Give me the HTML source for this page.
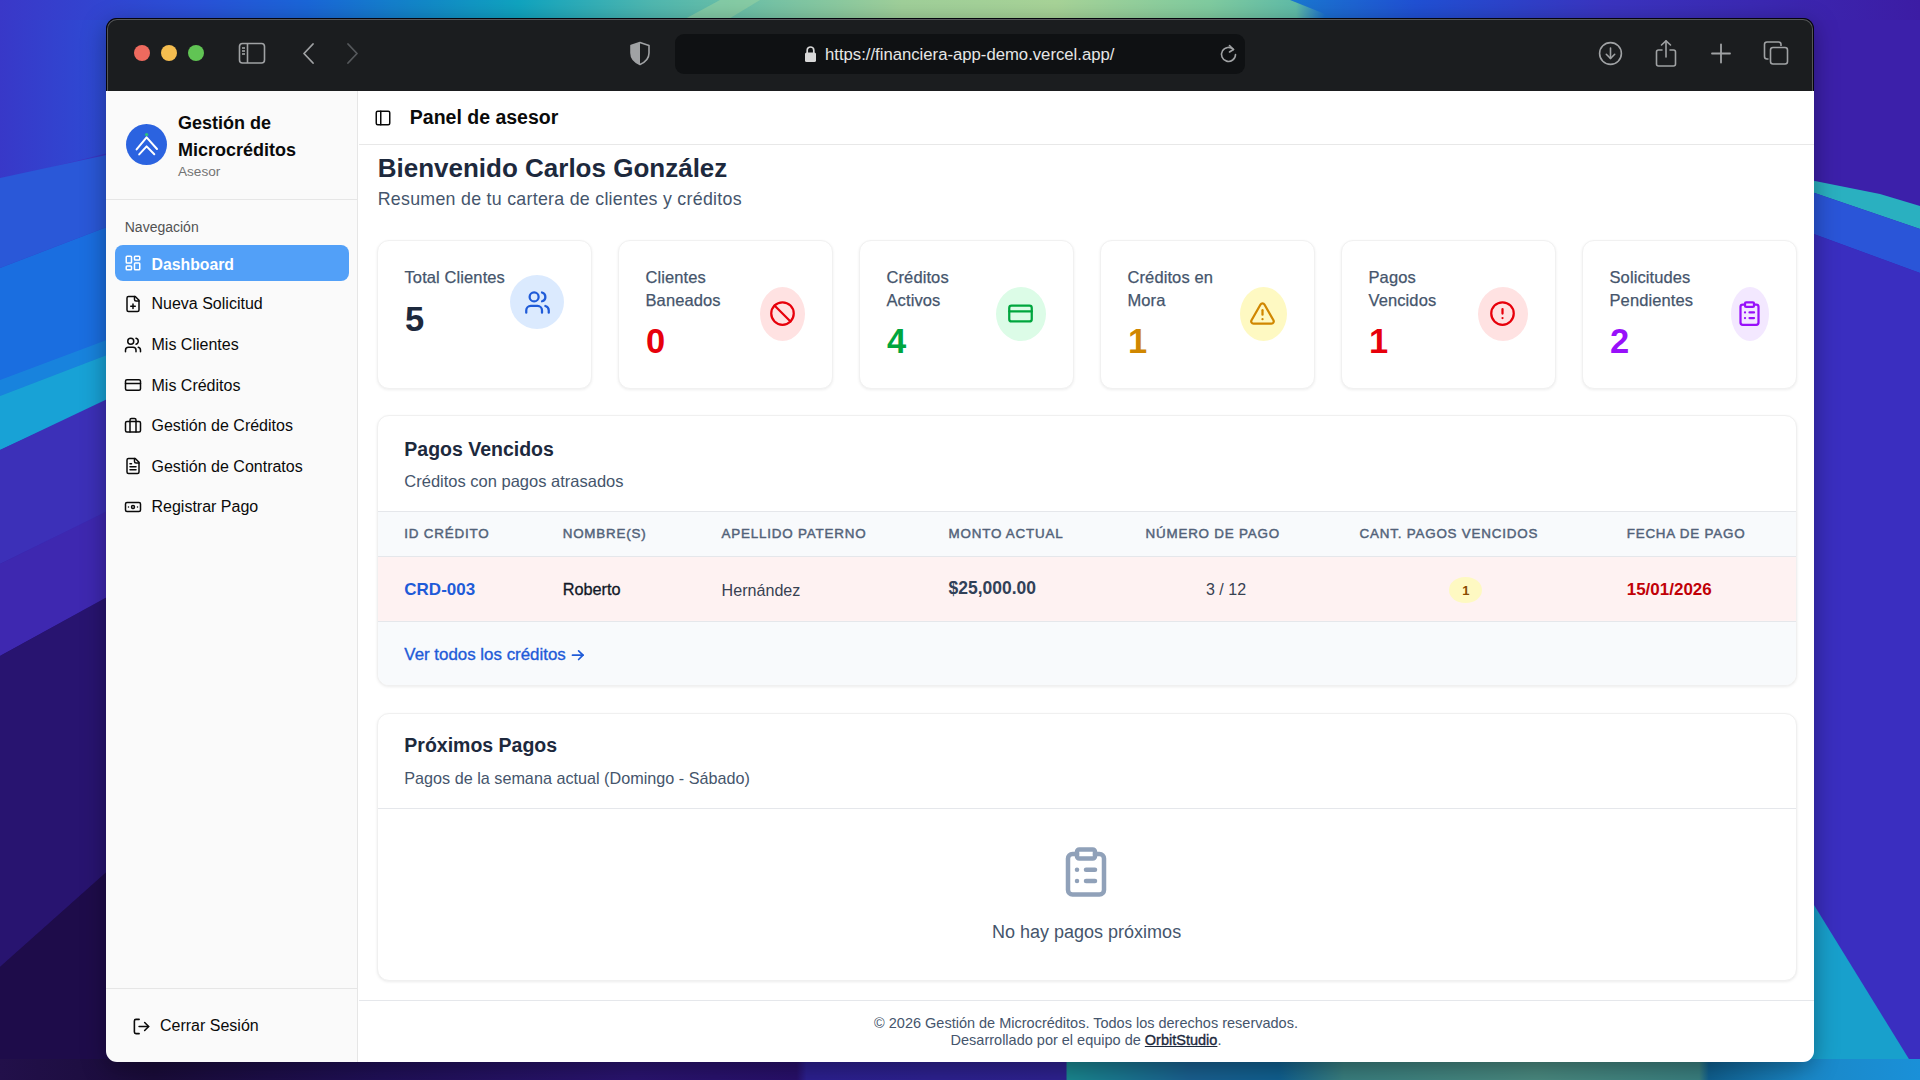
<!DOCTYPE html>
<html><head><meta charset="utf-8">
<style>
*{box-sizing:border-box;margin:0;padding:0}
html,body{width:1920px;height:1080px;overflow:hidden;font-family:"Liberation Sans",sans-serif}
body{position:relative;background:#2a1a80}
.abs{position:absolute}
.t{position:absolute;white-space:nowrap;line-height:1}
.box{position:absolute}
</style></head>
<body>
<svg class="abs" style="left:0;top:0" width="1920" height="1080" viewBox="0 0 1920 1080">
<defs>
<linearGradient id="wtop" x1="0" y1="0" x2="1920" y2="0" gradientUnits="userSpaceOnUse">
 <stop offset="0" stop-color="#3a38c8"/><stop offset="0.1" stop-color="#2a50d8"/><stop offset="0.16" stop-color="#1a66d8"/><stop offset="0.22" stop-color="#1288c8"/><stop offset="0.27" stop-color="#10a4c0"/><stop offset="0.34" stop-color="#50b8b0"/><stop offset="0.47" stop-color="#a0d09a"/><stop offset="0.55" stop-color="#a8d498"/><stop offset="0.63" stop-color="#80cca0"/><stop offset="0.675" stop-color="#60bca8"/><stop offset="0.69" stop-color="#1a70d0"/><stop offset="0.73" stop-color="#2050d0"/><stop offset="0.83" stop-color="#3a30c0"/><stop offset="1" stop-color="#3a1ca0"/>
</linearGradient>
<linearGradient id="wbot" x1="0" y1="0" x2="1920" y2="0" gradientUnits="userSpaceOnUse">
 <stop offset="0" stop-color="#22104a"/><stop offset="0.08" stop-color="#1a0c3a"/><stop offset="0.2" stop-color="#201058"/><stop offset="0.33" stop-color="#2a1470"/><stop offset="0.415" stop-color="#28106a"/><stop offset="0.42" stop-color="#2c2090"/><stop offset="0.555" stop-color="#2e2290"/><stop offset="0.556" stop-color="#1a8890"/><stop offset="0.62" stop-color="#1a6090"/><stop offset="0.666" stop-color="#106090"/><stop offset="0.70" stop-color="#3a8080"/><stop offset="0.80" stop-color="#4a8a80"/><stop offset="0.885" stop-color="#3a8080"/><stop offset="0.89" stop-color="#106090"/><stop offset="0.94" stop-color="#1a88c8"/><stop offset="1" stop-color="#1a90d8"/>
</linearGradient>
<linearGradient id="wleft" x1="0" y1="0" x2="0" y2="1080" gradientUnits="userSpaceOnUse">
 <stop offset="0" stop-color="#3a3ccc"/><stop offset="0.5" stop-color="#3a2ab4"/><stop offset="0.6" stop-color="#24106a"/><stop offset="1" stop-color="#1e0c48"/>
</linearGradient>
<linearGradient id="wtl" x1="0" y1="0" x2="120" y2="0" gradientUnits="userSpaceOnUse"><stop offset="0" stop-color="#3838c8"/><stop offset="1" stop-color="#2c4ed6"/></linearGradient>
<linearGradient id="wtop2" x1="1290" y1="0" x2="1920" y2="0" gradientUnits="userSpaceOnUse"><stop offset="0" stop-color="#1a78d0"/><stop offset="0.2" stop-color="#2050d4"/><stop offset="0.5" stop-color="#3a34c0"/><stop offset="1" stop-color="#3c1ca4"/></linearGradient>
<linearGradient id="wright" x1="0" y1="0" x2="0" y2="1080" gradientUnits="userSpaceOnUse">
 <stop offset="0" stop-color="#3a1ca4"/><stop offset="0.2" stop-color="#3c20b0"/><stop offset="0.5" stop-color="#3c2cc0"/><stop offset="1" stop-color="#3c2cc0"/>
</linearGradient>
</defs>
<rect width="1920" height="1080" fill="url(#wleft)"/>
<rect x="960" width="960" height="1080" fill="url(#wright)"/>
<polygon points="0,20 120,20 120,150 0,180" fill="url(#wtl)"/>
<polygon points="0,178 120,152 120,222 0,268" fill="#2a58d8"/>
<polygon points="0,268 120,222 120,350 0,396" fill="#1a6ee0"/>
<polygon points="0,380 120,335 120,355 0,400" fill="#1888dc" opacity="0.8"/>
<polygon points="0,396 120,350 120,395 0,450" fill="#18a2d6"/>
<polygon points="0,450 120,393 120,505 0,564" fill="#3c30b8"/>
<polygon points="0,564 120,505 120,590 0,656" fill="#3e28b0"/>
<polygon points="0,656 120,590 120,860 0,967" fill="#281470"/>
<polygon points="0,967 120,860 120,1080 0,1080" fill="#1e0c4a"/>
<polygon points="1800,0 1920,0 1920,205 1880,194 1800,178" fill="#3c20aa"/>
<polygon points="1800,178 1880,194 1920,206 1920,229 1800,188" fill="#2ab0c0"/>
<polygon points="1800,188 1920,229 1920,273 1800,229" fill="#2a55d8"/>
<polygon points="1800,229 1920,273 1920,1080 1800,1080" fill="#3a2ec0"/>
<polygon points="1800,886 1814,905 1920,1077 1920,1080 1800,1080" fill="#18a0cc"/>
<rect width="1920" height="20" fill="url(#wtop)"/>
<polygon points="1290,0 1920,0 1920,20 1340,20" fill="url(#wtop2)"/>
<polygon points="683,20 720,0 760,0 727,20" fill="#98d4a4" opacity="0.6"/>
<rect y="1059" width="1920" height="21" fill="url(#wbot)"/>
</svg>
<div class="box" style="left:106px;top:18px;width:1708px;height:1044px;border-radius:11px;background:transparent;box-shadow:0 6px 24px rgba(0,0,0,.35);overflow:hidden">
<div class="box" style="left:0;top:0;width:1708px;height:73px;background:#1b1d1f"></div>
<div class="box" style="left:28px;top:27px;width:16px;height:16px;border-radius:50%;background:#ee6a5e"></div>
<div class="box" style="left:55px;top:27px;width:16px;height:16px;border-radius:50%;background:#f5bd4f"></div>
<div class="box" style="left:82px;top:27px;width:16px;height:16px;border-radius:50%;background:#61c454"></div>
</div>
<svg class="abs" style="left:238px;top:42px" width="28" height="23" viewBox="0 0 28 23" fill="none" stroke="#a0a2a4" stroke-width="1.6"><rect x="1.5" y="1.5" width="25" height="19.5" rx="3"/><line x1="9.5" y1="1.5" x2="9.5" y2="21"/><line x1="4" y1="6" x2="7" y2="6"/><line x1="4" y1="9" x2="7" y2="9"/><line x1="4" y1="12" x2="7" y2="12"/></svg>
<svg class="abs" style="left:300px;top:42px" width="18" height="23" viewBox="0 0 18 23" fill="none" stroke="#a0a2a4" stroke-width="1.8" stroke-linecap="round" stroke-linejoin="round"><polyline points="13,2 4,11.5 13,21"/></svg>
<svg class="abs" style="left:343px;top:42px" width="18" height="23" viewBox="0 0 18 23" fill="none" stroke="#55585b" stroke-width="1.8" stroke-linecap="round" stroke-linejoin="round"><polyline points="5,2 14,11.5 5,21"/></svg>
<svg class="abs" style="left:629px;top:41px" width="22" height="25" viewBox="0 0 22 25"><path d="M11 1.5 L20 4.5 V12 C20 18 15.5 21.5 11 23.5 C6.5 21.5 2 18 2 12 V4.5 Z" fill="none" stroke="#a0a2a4" stroke-width="1.6" stroke-linejoin="round"/><path d="M11 1.5 L2 4.5 V12 C2 18 6.5 21.5 11 23.5 Z" fill="#a0a2a4"/></svg>
<div class="box" style="left:675px;top:34px;width:570px;height:40px;border-radius:9px;background:#0f1113"></div>
<svg class="abs" style="left:804px;top:45px" width="13" height="18" viewBox="0 0 13 18"><path d="M3.2 8 V5.3 A3.3 3.3 0 0 1 9.8 5.3 V8" fill="none" stroke="#d8d8d8" stroke-width="1.7"/><rect x="1" y="7.5" width="11" height="9.5" rx="1.6" fill="#d8d8d8"/></svg>
<div class="t" style="left:825.00px;top:46.66px;font-size:16.7px;color:#e6e6e6;font-weight:400;letter-spacing:0px;">https://financiera-app-demo.vercel.app/</div>
<svg class="abs" style="left:1218px;top:43px" width="21" height="22" viewBox="0 0 21 22" fill="none" stroke="#a0a2a4" stroke-width="1.6" stroke-linecap="round" stroke-linejoin="round"><path d="M15.5 6.5 A7 7 0 1 0 17.5 11.5"/><polyline points="11.5,2.5 15.5,6.5 11.5,9"/></svg>
<svg class="abs" style="left:1597px;top:41px" width="26" height="26" viewBox="0 0 26 26" fill="none" stroke="#a0a2a4" stroke-width="1.6" stroke-linecap="round" stroke-linejoin="round"><circle cx="13.5" cy="12.5" r="10.9"/><line x1="13.5" y1="7" x2="13.5" y2="17.5"/><polyline points="9.3,13.3 13.5,17.5 17.7,13.3"/></svg>
<svg class="abs" style="left:1654px;top:39px" width="24" height="29" viewBox="0 0 24 29" fill="none" stroke="#a0a2a4" stroke-width="1.6" stroke-linecap="round" stroke-linejoin="round"><path d="M8 11 H4.5 A2 2 0 0 0 2.5 13 V25 A2 2 0 0 0 4.5 27 H19.5 A2 2 0 0 0 21.5 25 V13 A2 2 0 0 0 19.5 11 H16"/><line x1="12" y1="2" x2="12" y2="18"/><polyline points="7.5,6 12,1.8 16.5,6"/></svg>
<svg class="abs" style="left:1709px;top:42px" width="23" height="23" viewBox="0 0 23 23" fill="none" stroke="#a0a2a4" stroke-width="1.8" stroke-linecap="round"><line x1="12" y1="2.5" x2="12" y2="20.5"/><line x1="3" y1="11.5" x2="21" y2="11.5"/></svg>
<svg class="abs" style="left:1762px;top:40px" width="28" height="27" viewBox="0 0 28 27" fill="none" stroke="#a0a2a4" stroke-width="1.6" stroke-linejoin="round"><path d="M6.5 19 H5 A2.5 2.5 0 0 1 2.5 16.5 V4.5 A2.5 2.5 0 0 1 5 2 H16.5 A2.5 2.5 0 0 1 19 4.5 V6"/><rect x="8.5" y="7.5" width="17" height="16.5" rx="2.5"/></svg>
<div class="box" style="left:106px;top:91px;width:252px;height:971px;background:#fafafa;border-right:1px solid #e6e6e6;border-bottom-left-radius:11px"></div>
<div class="box" style="left:358px;top:91px;width:1456px;height:971px;background:#fff;border-bottom-right-radius:11px"></div>
<div class="box" style="left:106px;top:199px;width:252px;height:1px;background:#e6e6e6"></div>
<div class="box" style="left:106px;top:988px;width:252px;height:1px;background:#e6e6e6"></div>
<svg class="abs" style="left:125.5px;top:124px" width="41" height="41" viewBox="0 0 41 41"><circle cx="20.5" cy="20.5" r="20.5" fill="#2b63e0"/><circle cx="20.6" cy="10.6" r="1.7" fill="#2fbf7a"/><polyline points="10.6,25.4 20.6,13.4 31,25" fill="none" stroke="#fff" stroke-width="2" stroke-linecap="round" stroke-linejoin="round"/><polyline points="13.2,30.4 20.6,22.4 28.3,30.2" fill="none" stroke="#fff" stroke-width="2" stroke-linecap="round" stroke-linejoin="round"/></svg>
<div class="t" style="left:178.00px;top:114.36px;font-size:18px;color:#0a0a0a;font-weight:700;letter-spacing:0px;">Gestión de</div>
<div class="t" style="left:178.00px;top:141.46px;font-size:18px;color:#0a0a0a;font-weight:700;letter-spacing:0px;">Microcréditos</div>
<div class="t" style="left:178.00px;top:165.29px;font-size:13.6px;color:#737373;font-weight:400;letter-spacing:0px;">Asesor</div>
<div class="t" style="left:124.75px;top:219.85px;font-size:14px;color:#525252;font-weight:400;letter-spacing:0px;">Navegación</div>
<div class="box" style="left:114.6px;top:245px;width:234.2px;height:36px;border-radius:8px;background:#52a0f8"></div>
<svg class="abs" style="left:123.5px;top:254.39999999999998px;" width="18" height="18" viewBox="0 0 24 24" fill="none" stroke="#fff" stroke-width="2" stroke-linecap="round" stroke-linejoin="round"><rect width="7" height="9" x="3" y="3" rx="1"/><rect width="7" height="5" x="14" y="3" rx="1"/><rect width="7" height="9" x="14" y="12" rx="1"/><rect width="7" height="5" x="3" y="16" rx="1"/></svg>
<div class="t" style="left:151.50px;top:256.53px;font-size:15.8px;color:#fff;font-weight:700;letter-spacing:0px;">Dashboard</div>
<svg class="abs" style="left:123.5px;top:294.5px;" width="18" height="18" viewBox="0 0 24 24" fill="none" stroke="#0a0a0a" stroke-width="2" stroke-linecap="round" stroke-linejoin="round"><path d="M15 2H6a2 2 0 0 0-2 2v16a2 2 0 0 0 2 2h12a2 2 0 0 0 2-2V7Z"/><path d="M14 2v4a2 2 0 0 0 2 2h4"/><path d="M9 15h6"/><path d="M12 18v-6"/></svg>
<div class="t" style="left:151.50px;top:296.46px;font-size:16px;color:#0a0a0a;font-weight:400;letter-spacing:0px;">Nueva Solicitud</div>
<svg class="abs" style="left:123.5px;top:335.5px;" width="18" height="18" viewBox="0 0 24 24" fill="none" stroke="#0a0a0a" stroke-width="2" stroke-linecap="round" stroke-linejoin="round"><path d="M16 21v-2a4 4 0 0 0-4-4H6a4 4 0 0 0-4 4v2"/><circle cx="9" cy="7" r="4"/><path d="M22 21v-2a4 4 0 0 0-3-3.87"/><path d="M16 3.13a4 4 0 0 1 0 7.75"/></svg>
<div class="t" style="left:151.50px;top:337.46px;font-size:16px;color:#0a0a0a;font-weight:400;letter-spacing:0px;">Mis Clientes</div>
<svg class="abs" style="left:123.5px;top:376.0px;" width="18" height="18" viewBox="0 0 24 24" fill="none" stroke="#0a0a0a" stroke-width="2" stroke-linecap="round" stroke-linejoin="round"><rect width="20" height="14" x="2" y="5" rx="2"/><line x1="2" x2="22" y1="10" y2="10"/></svg>
<div class="t" style="left:151.50px;top:377.96px;font-size:16px;color:#0a0a0a;font-weight:400;letter-spacing:0px;">Mis Créditos</div>
<svg class="abs" style="left:123.5px;top:416.5px;" width="18" height="18" viewBox="0 0 24 24" fill="none" stroke="#0a0a0a" stroke-width="2" stroke-linecap="round" stroke-linejoin="round"><path d="M16 20V4a2 2 0 0 0-2-2h-4a2 2 0 0 0-2 2v16"/><rect width="20" height="14" x="2" y="6" rx="2"/></svg>
<div class="t" style="left:151.50px;top:418.46px;font-size:16px;color:#0a0a0a;font-weight:400;letter-spacing:0px;">Gestión de Créditos</div>
<svg class="abs" style="left:123.5px;top:457.0px;" width="18" height="18" viewBox="0 0 24 24" fill="none" stroke="#0a0a0a" stroke-width="2" stroke-linecap="round" stroke-linejoin="round"><path d="M15 2H6a2 2 0 0 0-2 2v16a2 2 0 0 0 2 2h12a2 2 0 0 0 2-2V7Z"/><path d="M14 2v4a2 2 0 0 0 2 2h4"/><path d="M10 9H8"/><path d="M16 13H8"/><path d="M16 17H8"/></svg>
<div class="t" style="left:151.50px;top:458.96px;font-size:16px;color:#0a0a0a;font-weight:400;letter-spacing:0px;">Gestión de Contratos</div>
<svg class="abs" style="left:123.5px;top:497.5px;" width="18" height="18" viewBox="0 0 24 24" fill="none" stroke="#0a0a0a" stroke-width="2" stroke-linecap="round" stroke-linejoin="round"><rect width="20" height="12" x="2" y="6" rx="2"/><circle cx="12" cy="12" r="2"/><path d="M6 12h.01M18 12h.01"/></svg>
<div class="t" style="left:151.50px;top:499.46px;font-size:16px;color:#0a0a0a;font-weight:400;letter-spacing:0px;">Registrar Pago</div>
<svg class="abs" style="left:132px;top:1017px;" width="19" height="19" viewBox="0 0 24 24" fill="none" stroke="#0a0a0a" stroke-width="2" stroke-linecap="round" stroke-linejoin="round"><path d="M9 21H5a2 2 0 0 1-2-2V5a2 2 0 0 1 2-2h4"/><polyline points="16 17 21 12 16 7"/><line x1="21" x2="9" y1="12" y2="12"/></svg>
<div class="t" style="left:160.00px;top:1018.46px;font-size:16px;color:#0a0a0a;font-weight:400;letter-spacing:0px;">Cerrar Sesión</div>
<div class="box" style="left:359px;top:144px;width:1455px;height:1px;background:#e8e8e8"></div>
<svg class="abs" style="left:374px;top:109px;" width="18" height="18" viewBox="0 0 24 24" fill="none" stroke="#0a0a0a" stroke-width="2" stroke-linecap="round" stroke-linejoin="round"><rect width="18" height="18" x="3" y="3" rx="2"/><path d="M9 3v18"/></svg>
<div class="t" style="left:409.80px;top:107.79px;font-size:19.5px;color:#0a0a0a;font-weight:700;letter-spacing:0px;">Panel de asesor</div>
<div class="t" style="left:377.70px;top:154.79px;font-size:26px;color:#1d293d;font-weight:700;letter-spacing:0px;">Bienvenido Carlos González</div>
<div class="t" style="left:377.70px;top:190.93px;font-size:17.8px;color:#45556c;font-weight:400;letter-spacing:0.28px;">Resumen de tu cartera de clientes y créditos</div>
<div class="box" style="left:376.5px;top:240px;width:215.5px;height:148.5px;border-radius:12px;background:#fff;border:1px solid #f1f1f1;box-shadow:0 1px 3px rgba(0,0,0,.07)"></div>
<div class="t" style="left:404.50px;top:269.23px;font-size:16.5px;color:#45556c;font-weight:400;letter-spacing:0.1px;-webkit-text-stroke:0.25px #45556c">Total Clientes</div>
<div class="t" style="left:405.00px;top:301.80px;font-size:34.5px;color:#1d293d;font-weight:700;letter-spacing:0px;">5</div>
<div class="box" style="left:510px;top:275px;width:54px;height:54px;border-radius:50%;background:#dbeafe"></div>
<svg class="abs" style="left:523.5px;top:288.5px;" width="27" height="27" viewBox="0 0 24 24" fill="none" stroke="#1f5bd8" stroke-width="2" stroke-linecap="round" stroke-linejoin="round"><path d="M16 21v-2a4 4 0 0 0-4-4H6a4 4 0 0 0-4 4v2"/><circle cx="9" cy="7" r="4"/><path d="M22 21v-2a4 4 0 0 0-3-3.87"/><path d="M16 3.13a4 4 0 0 1 0 7.75"/></svg>
<div class="box" style="left:617.5px;top:240px;width:215.5px;height:148.5px;border-radius:12px;background:#fff;border:1px solid #f1f1f1;box-shadow:0 1px 3px rgba(0,0,0,.07)"></div>
<div class="t" style="left:645.50px;top:269.23px;font-size:16.5px;color:#45556c;font-weight:400;letter-spacing:0.1px;-webkit-text-stroke:0.25px #45556c">Clientes</div>
<div class="t" style="left:645.50px;top:291.73px;font-size:16.5px;color:#45556c;font-weight:400;letter-spacing:0.1px;-webkit-text-stroke:0.25px #45556c">Baneados</div>
<div class="t" style="left:646.00px;top:323.80px;font-size:34.5px;color:#e7000b;font-weight:700;letter-spacing:0px;">0</div>
<div class="box" style="left:760px;top:287px;width:45px;height:54px;border-radius:50%;background:#ffe2e2"></div>
<svg class="abs" style="left:769.0px;top:299.7px;" width="27" height="27" viewBox="0 0 24 24" fill="none" stroke="#e7000b" stroke-width="2" stroke-linecap="round" stroke-linejoin="round"><circle cx="12" cy="12" r="10"/><path d="m4.9 4.9 14.2 14.2"/></svg>
<div class="box" style="left:858.5px;top:240px;width:215.5px;height:148.5px;border-radius:12px;background:#fff;border:1px solid #f1f1f1;box-shadow:0 1px 3px rgba(0,0,0,.07)"></div>
<div class="t" style="left:886.50px;top:269.23px;font-size:16.5px;color:#45556c;font-weight:400;letter-spacing:0.1px;-webkit-text-stroke:0.25px #45556c">Créditos</div>
<div class="t" style="left:886.50px;top:291.73px;font-size:16.5px;color:#45556c;font-weight:400;letter-spacing:0.1px;-webkit-text-stroke:0.25px #45556c">Activos</div>
<div class="t" style="left:887.00px;top:323.80px;font-size:34.5px;color:#00a63e;font-weight:700;letter-spacing:0px;">4</div>
<div class="box" style="left:996px;top:287px;width:50px;height:54px;border-radius:50%;background:#dcfce7"></div>
<svg class="abs" style="left:1006.9px;top:299.7px;" width="27" height="27" viewBox="0 0 24 24" fill="none" stroke="#00a63e" stroke-width="2" stroke-linecap="round" stroke-linejoin="round"><rect width="20" height="14" x="2" y="5" rx="2"/><line x1="2" x2="22" y1="10" y2="10"/></svg>
<div class="box" style="left:1099.5px;top:240px;width:215.5px;height:148.5px;border-radius:12px;background:#fff;border:1px solid #f1f1f1;box-shadow:0 1px 3px rgba(0,0,0,.07)"></div>
<div class="t" style="left:1127.50px;top:269.23px;font-size:16.5px;color:#45556c;font-weight:400;letter-spacing:0.1px;-webkit-text-stroke:0.25px #45556c">Créditos en</div>
<div class="t" style="left:1127.50px;top:291.73px;font-size:16.5px;color:#45556c;font-weight:400;letter-spacing:0.1px;-webkit-text-stroke:0.25px #45556c">Mora</div>
<div class="t" style="left:1128.00px;top:323.80px;font-size:34.5px;color:#d08700;font-weight:700;letter-spacing:0px;">1</div>
<div class="box" style="left:1240px;top:287px;width:47px;height:54px;border-radius:50%;background:#fef9c2"></div>
<svg class="abs" style="left:1249.4px;top:299.7px;" width="27" height="27" viewBox="0 0 24 24" fill="none" stroke="#d08700" stroke-width="2" stroke-linecap="round" stroke-linejoin="round"><path d="m21.73 18-8-14a2 2 0 0 0-3.48 0l-8 14A2 2 0 0 0 4 21h16a2 2 0 0 0 1.73-3"/><path d="M12 9v4"/><path d="M12 17h.01"/></svg>
<div class="box" style="left:1340.5px;top:240px;width:215.5px;height:148.5px;border-radius:12px;background:#fff;border:1px solid #f1f1f1;box-shadow:0 1px 3px rgba(0,0,0,.07)"></div>
<div class="t" style="left:1368.50px;top:269.23px;font-size:16.5px;color:#45556c;font-weight:400;letter-spacing:0.1px;-webkit-text-stroke:0.25px #45556c">Pagos</div>
<div class="t" style="left:1368.50px;top:291.73px;font-size:16.5px;color:#45556c;font-weight:400;letter-spacing:0.1px;-webkit-text-stroke:0.25px #45556c">Vencidos</div>
<div class="t" style="left:1369.00px;top:323.80px;font-size:34.5px;color:#e7000b;font-weight:700;letter-spacing:0px;">1</div>
<div class="box" style="left:1478px;top:287px;width:50px;height:54px;border-radius:50%;background:#ffe2e2"></div>
<svg class="abs" style="left:1488.9px;top:299.7px;" width="27" height="27" viewBox="0 0 24 24" fill="none" stroke="#e7000b" stroke-width="2" stroke-linecap="round" stroke-linejoin="round"><circle cx="12" cy="12" r="10"/><line x1="12" x2="12" y1="8" y2="12"/><line x1="12" x2="12.01" y1="16" y2="16"/></svg>
<div class="box" style="left:1581.5px;top:240px;width:215.5px;height:148.5px;border-radius:12px;background:#fff;border:1px solid #f1f1f1;box-shadow:0 1px 3px rgba(0,0,0,.07)"></div>
<div class="t" style="left:1609.50px;top:269.23px;font-size:16.5px;color:#45556c;font-weight:400;letter-spacing:0.1px;-webkit-text-stroke:0.25px #45556c">Solicitudes</div>
<div class="t" style="left:1609.50px;top:291.73px;font-size:16.5px;color:#45556c;font-weight:400;letter-spacing:0.1px;-webkit-text-stroke:0.25px #45556c">Pendientes</div>
<div class="t" style="left:1610.00px;top:323.80px;font-size:34.5px;color:#9810fa;font-weight:700;letter-spacing:0px;">2</div>
<div class="box" style="left:1731px;top:287px;width:38px;height:54px;border-radius:50%;background:#f3e8ff"></div>
<svg class="abs" style="left:1735.9px;top:299.7px;" width="27" height="27" viewBox="0 0 24 24" fill="none" stroke="#9810fa" stroke-width="2" stroke-linecap="round" stroke-linejoin="round"><rect width="8" height="4" x="8" y="2" rx="1" ry="1"/><path d="M16 4h2a2 2 0 0 1 2 2v14a2 2 0 0 1-2 2H6a2 2 0 0 1-2-2V6a2 2 0 0 1 2-2h2"/><path d="M12 11h4"/><path d="M12 16h4"/><path d="M8 11h.01"/><path d="M8 16h.01"/></svg>
<div class="box" style="left:376.5px;top:415px;width:1420px;height:271px;border-radius:12px;background:#fff;border:1px solid #f0f0f0;box-shadow:0 1px 3px rgba(0,0,0,.08);overflow:hidden"><div class="box" style="left:0;top:95px;width:1419px;height:46px;background:#f8fafc;border-top:1px solid #e5e7eb;border-bottom:1px solid #e5e7eb"></div><div class="box" style="left:0;top:141px;width:1419px;height:65px;background:#fef2f2;border-bottom:1px solid #e5e7eb"></div><div class="box" style="left:0;top:206px;width:1419px;height:65px;background:#f8fafc"></div></div>
<div class="t" style="left:404.30px;top:439.89px;font-size:19.5px;color:#1d293d;font-weight:700;letter-spacing:0px;">Pagos Vencidos</div>
<div class="t" style="left:404.30px;top:473.03px;font-size:16.5px;color:#45556c;font-weight:400;letter-spacing:0px;">Créditos con pagos atrasados</div>
<div class="t" style="left:404.30px;top:526.96px;font-size:13.4px;color:#526279;font-weight:400;letter-spacing:0.8px;-webkit-text-stroke:0.45px #526279">ID CRÉDITO</div>
<div class="t" style="left:562.70px;top:526.96px;font-size:13.4px;color:#526279;font-weight:400;letter-spacing:0.8px;-webkit-text-stroke:0.45px #526279">NOMBRE(S)</div>
<div class="t" style="left:721.60px;top:526.96px;font-size:13.4px;color:#526279;font-weight:400;letter-spacing:0.8px;-webkit-text-stroke:0.45px #526279">APELLIDO PATERNO</div>
<div class="t" style="left:948.50px;top:526.96px;font-size:13.4px;color:#526279;font-weight:400;letter-spacing:0.8px;-webkit-text-stroke:0.45px #526279">MONTO ACTUAL</div>
<div class="t" style="left:1145.50px;top:526.96px;font-size:13.4px;color:#526279;font-weight:400;letter-spacing:0.8px;-webkit-text-stroke:0.45px #526279">NÚMERO DE PAGO</div>
<div class="t" style="left:1359.50px;top:526.96px;font-size:13.4px;color:#526279;font-weight:400;letter-spacing:0.8px;-webkit-text-stroke:0.45px #526279">CANT. PAGOS VENCIDOS</div>
<div class="t" style="left:1626.70px;top:526.96px;font-size:13.4px;color:#526279;font-weight:400;letter-spacing:0.8px;-webkit-text-stroke:0.45px #526279">FECHA DE PAGO</div>
<div class="t" style="left:404.30px;top:580.81px;font-size:17px;color:#1f5bd8;font-weight:700;letter-spacing:0px;">CRD-003</div>
<div class="t" style="left:562.70px;top:581.40px;font-size:16.3px;color:#111827;font-weight:400;letter-spacing:0px;-webkit-text-stroke:0.3px #111827">Roberto</div>
<div class="t" style="left:721.60px;top:581.57px;font-size:16.1px;color:#374151;font-weight:400;letter-spacing:0px;">Hernández</div>
<div class="t" style="left:948.50px;top:580.39px;font-size:17.5px;color:#314158;font-weight:700;letter-spacing:0px;">$25,000.00</div>
<div class="t" style="left:1206.00px;top:581.66px;font-size:16px;color:#374151;font-weight:400;letter-spacing:0px;">3 / 12</div>
<div class="box" style="left:1449px;top:576.5px;width:33px;height:26.5px;border-radius:50%;background:#fef9c2"></div>
<div class="t" style="left:1165.80px;width:600px;text-align:center;top:583.50px;font-size:13px;color:#894b00;font-weight:700;letter-spacing:0px;">1</div>
<div class="t" style="left:1626.70px;top:580.81px;font-size:17px;color:#c10007;font-weight:700;letter-spacing:0px;">15/01/2026</div>
<div class="t" style="left:404.30px;top:646.99px;font-size:16.9px;color:#1f5bd8;font-weight:400;letter-spacing:0px;-webkit-text-stroke:0.35px #1f5bd8">Ver todos los créditos</div>
<svg class="abs" style="left:571px;top:649px" width="14" height="12" viewBox="0 0 14 12" fill="none" stroke="#1f5bd8" stroke-width="1.7" stroke-linecap="round" stroke-linejoin="round"><line x1="1.5" y1="6.2" x2="12" y2="6.2"/><polyline points="7.6,1.9 12,6.2 7.6,10.5"/></svg>
<div class="box" style="left:376.5px;top:712.5px;width:1420px;height:268.5px;border-radius:12px;background:#fff;border:1px solid #f0f0f0;box-shadow:0 1px 3px rgba(0,0,0,.08);overflow:hidden"><div class="box" style="left:0;top:94px;width:1419px;height:1px;background:#e5e7eb"></div></div>
<div class="t" style="left:404.30px;top:736.29px;font-size:19.5px;color:#1d293d;font-weight:700;letter-spacing:0px;">Próximos Pagos</div>
<div class="t" style="left:404.30px;top:769.59px;font-size:16.2px;color:#45556c;font-weight:400;letter-spacing:0px;">Pagos de la semana actual (Domingo - Sábado)</div>
<svg class="abs" style="left:1059.3px;top:844.8px;" width="54" height="54" viewBox="0 0 24 24" fill="none" stroke="#90a1b9" stroke-width="2" stroke-linecap="round" stroke-linejoin="round"><rect width="8" height="4" x="8" y="2" rx="1" ry="1"/><path d="M16 4h2a2 2 0 0 1 2 2v14a2 2 0 0 1-2 2H6a2 2 0 0 1-2-2V6a2 2 0 0 1 2-2h2"/><path d="M12 11h4"/><path d="M12 16h4"/><path d="M8 11h.01"/><path d="M8 16h.01"/></svg>
<div class="t" style="left:786.60px;width:600px;text-align:center;top:922.56px;font-size:18px;color:#45556c;font-weight:400;letter-spacing:0px;">No hay pagos próximos</div>
<div class="box" style="left:359px;top:1000px;width:1455px;height:1px;background:#e5e7eb"></div>
<div class="t" style="left:786.00px;width:600px;text-align:center;top:1015.73px;font-size:14.5px;color:#45556c;font-weight:400;letter-spacing:0px;">© 2026 Gestión de Microcréditos. Todos los derechos reservados.</div>
<div class="t" style="left:786.00px;width:600px;text-align:center;top:1032.73px;font-size:14.5px;color:#45556c;font-weight:400;letter-spacing:0px;">Desarrollado por el equipo de <span style="color:#1d293d;text-decoration:underline;-webkit-text-stroke:0.35px #1d293d">OrbitStudio</span>.</div>
<div class="box" style="left:106px;top:18px;width:1708px;height:73px;border-radius:11px 11px 0 0;border:1px solid rgba(0,0,10,.85);border-bottom:none"><div class="box" style="left:0;top:0;right:0;height:73px;border-radius:10px 10px 0 0;border:1px solid rgba(255,255,255,.26);border-bottom:none"></div></div>
</body></html>
